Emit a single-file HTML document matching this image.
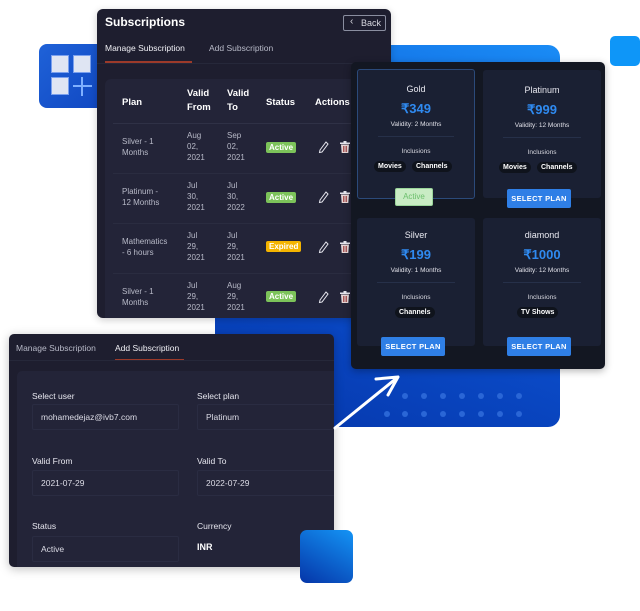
<!DOCTYPE html>
<html><head><meta charset="utf-8"><style>
*{margin:0;padding:0;box-sizing:border-box}
body{width:640px;height:611px;background:#fff;position:relative;overflow:hidden;font-family:"Liberation Sans",sans-serif;color:#e6e6ee}
.abs{position:absolute}
.t{position:absolute;white-space:nowrap}
.badge{position:absolute;font-size:8px;font-weight:bold;color:#fff;padding:1px 3px;border-radius:2px}
.card{position:absolute;background:#1a2033;border-radius:3px}
.card .n{position:absolute;width:100%;text-align:center;font-size:9px;color:#e8e8f0}
.card .p{position:absolute;width:100%;text-align:center;font-size:13px;font-weight:bold;color:#2f8af0}
.card .v{position:absolute;width:100%;text-align:center;font-size:6.5px;color:#e0e0e8}
.card .i{position:absolute;width:100%;text-align:center;font-size:6.5px;color:#d8d8e0}
.card hr{position:absolute;left:20px;right:20px;border:0;border-top:1px solid #263049}
.chip{position:absolute;font-size:7px;font-weight:bold;background:#0f131c;border-radius:6px;padding:2px 4px;color:#fff}
.btn{position:absolute;background:#2f7fe6;color:#fff;font-size:7.5px;font-weight:bold;text-align:center;border-radius:2px;letter-spacing:.3px}
.lbl{position:absolute;font-size:8.5px;color:#e6e6ee}
.inp{position:absolute;font-size:8.5px;color:#dcdce6;border:1px solid #2a2c42;border-radius:2px;padding:7px 8px;height:26px}
.ic{position:absolute}
</style></head><body>
<div class="abs" style="left:39px;top:44px;width:120px;height:64px;border-radius:8px;background:linear-gradient(135deg,#1f62d8,#0a3cb8)"></div>
<div class="abs" style="left:215px;top:45px;width:345px;height:382px;border-radius:12px;background:linear-gradient(200deg,#1a8cf5 0%,#0d55d6 45%,#0536aa 100%)"></div>
<div class="abs" style="left:610px;top:36px;width:30px;height:30px;border-radius:5px;background:#0e96f8"></div>
<div class="abs" style="left:300px;top:530px;width:53px;height:53px;border-radius:7px;background:linear-gradient(210deg,#1494f5,#0535a8);z-index:5"></div>
<div class="abs" style="left:51px;top:55px;width:18px;height:18px;background:#dfe5f3;border:1px solid #7aa0ee"></div>
<div class="abs" style="left:73px;top:55px;width:18px;height:18px;background:#dfe5f3;border:1px solid #7aa0ee"></div>
<div class="abs" style="left:51px;top:77px;width:18px;height:18px;background:#dfe5f3;border:1px solid #7aa0ee"></div>
<div class="abs" style="left:73px;top:85px;width:19px;height:2px;background:#7fb0ff"></div>
<div class="abs" style="left:81px;top:77px;width:2px;height:19px;background:#7fb0ff"></div>
<svg class="abs" style="left:380px;top:385px" width="170" height="40">
<g fill="#2a66d6">
<circle cx="25" cy="11" r="3"/><circle cx="44" cy="11" r="3"/><circle cx="63" cy="11" r="3"/><circle cx="82" cy="11" r="3"/><circle cx="101" cy="11" r="3"/><circle cx="120" cy="11" r="3"/><circle cx="139" cy="11" r="3"/>
<circle cx="7" cy="29" r="3"/><circle cx="25" cy="29" r="3"/><circle cx="44" cy="29" r="3"/><circle cx="63" cy="29" r="3"/><circle cx="82" cy="29" r="3"/><circle cx="101" cy="29" r="3"/><circle cx="120" cy="29" r="3"/><circle cx="139" cy="29" r="3"/></g></svg>
<svg class="abs" style="left:330px;top:365px;z-index:6" width="80" height="70"><path d="M5 63 L68 12 M46 14 L68 12 L58 30" stroke="#fff" stroke-width="3" fill="none" stroke-linecap="round" stroke-linejoin="round"/></svg>

<div class="abs" style="left:97px;top:9px;width:294px;height:309px;background:#1e1e2f;border-radius:6px;overflow:hidden;box-shadow:0 2px 8px rgba(0,0,0,.2)">
<div class="t" style="left:8px;top:6px;font-size:12px;font-weight:bold;color:#fff">Subscriptions</div>
<div class="abs" style="left:246px;top:6px;width:43px;height:16px;border:1px solid #8a8ea0;border-radius:2px;font-size:9px;color:#d8d8e0;padding:2px 0 0 17px">Back</div>
<div class="t" style="left:253px;top:7px;font-size:10px;color:#d8d8e0">‹</div>
<div class="t" style="left:8px;top:34px;font-size:8.5px;color:#f0f0f5">Manage Subscription</div>
<div class="t" style="left:112px;top:34px;font-size:8.5px;color:#b8bac8">Add Subscription</div>
<div class="abs" style="left:8px;top:52px;width:87px;height:2px;background:#9c3a2a"></div>
<div class="abs" style="left:0;top:54px;width:294px;height:1px;background:#26283a"></div>
<div class="abs" style="left:8px;top:70px;width:290px;height:250px;background:#232438;border-radius:6px">
<div class="t" style="left:17px;top:18px;font-size:9.5px;font-weight:bold;color:#fff">Plan</div>
<div class="t" style="left:82px;top:8px;font-size:9.5px;font-weight:bold;color:#fff;line-height:14px">Valid<br>From</div>
<div class="t" style="left:122px;top:8px;font-size:9.5px;font-weight:bold;color:#fff;line-height:14px">Valid<br>To</div>
<div class="t" style="left:161px;top:18px;font-size:9.5px;font-weight:bold;color:#fff">Status</div>
<div class="t" style="left:210px;top:18px;font-size:9.5px;font-weight:bold;color:#fff">Actions</div>
<div class="abs" style="left:8px;top:44px;width:290px;height:1px;background:#2f3146"></div>
<div class="abs" style="left:8px;top:94px;width:290px;height:1px;background:#2a2c40"></div>
<div class="abs" style="left:8px;top:144px;width:290px;height:1px;background:#2a2c40"></div>
<div class="abs" style="left:8px;top:194px;width:290px;height:1px;background:#2a2c40"></div>
</div>
</div>
<div style="font-size:8px;color:#b8bac8;line-height:11px">
<div class="t" style="left:122px;top:136px">Silver - 1<br>Months</div>
<div class="t" style="left:187px;top:130px">Aug<br>02,<br>2021</div>
<div class="t" style="left:227px;top:130px">Sep<br>02,<br>2021</div>
<div class="t" style="left:122px;top:186px">Platinum -<br>12 Months</div>
<div class="t" style="left:187px;top:180px">Jul<br>30,<br>2021</div>
<div class="t" style="left:227px;top:180px">Jul<br>30,<br>2022</div>
<div class="t" style="left:122px;top:236px">Mathematics<br>- 6 hours</div>
<div class="t" style="left:187px;top:230px">Jul<br>29,<br>2021</div>
<div class="t" style="left:227px;top:230px">Jul<br>29,<br>2021</div>
<div class="t" style="left:122px;top:286px">Silver - 1<br>Months</div>
<div class="t" style="left:187px;top:280px">Jul<br>29,<br>2021</div>
<div class="t" style="left:227px;top:280px">Aug<br>29,<br>2021</div>
</div>
<div class="badge" style="left:266px;top:142px;background:#7cc35a">Active</div>
<div class="badge" style="left:266px;top:192px;background:#7cc35a">Active</div>
<div class="badge" style="left:266px;top:241px;background:#f4b400">Expired</div>
<div class="badge" style="left:266px;top:291px;background:#7cc35a">Active</div>
<svg class="ic" style="left:318px;top:140px" width="36" height="170">
<defs><g id="r"><path d="M2 10 L8 2 L10 4 L4 12 L1.5 12.5 Z" fill="none" stroke="#e6e6ee" stroke-width="1"/>
<g transform="translate(22,1)"><rect x="0" y="1.5" width="10" height="1.5" fill="#e6e6ee"/><rect x="3.5" y="0" width="3" height="2" fill="#e6e6ee"/><path d="M1 3.5 H9 L8.3 12 H1.7 Z" fill="#e8d8d8"/><path d="M3.5 5 V11 M5 5 V11 M6.5 5 V11" stroke="#9a3a3a" stroke-width=".8"/></g></g></defs>
<use href="#r" y="0"/><use href="#r" y="50"/><use href="#r" y="100"/><use href="#r" y="150"/>
</svg>

<div class="abs" style="left:351px;top:62px;width:254px;height:307px;background:#131722;border-radius:5px;box-shadow:0 2px 8px rgba(0,0,0,.3)">
<div class="card" style="left:6px;top:7px;width:118px;height:130px;border:1px solid #2b4a7a">
<div class="n" style="top:14px">Gold</div><div class="p" style="top:31px">₹349</div><div class="v" style="top:51px">Validity: 2 Months</div>
<hr style="top:66px"><div class="i" style="top:78px">Inclusions</div>
<div class="chip" style="left:16px;top:91px">Movies</div><div class="chip" style="left:54px;top:91px">Channels</div></div>
<div class="abs" style="left:44px;top:126px;width:38px;height:18px;background:#c9ecc4;border:1px solid #9ad59a;border-radius:2px;color:#6cbf6c;font-size:8px;text-align:center;padding-top:3px">Active</div>
<div class="card" style="left:132px;top:8px;width:118px;height:128px">
<div class="n" style="top:15px">Platinum</div><div class="p" style="top:32px">₹999</div><div class="v" style="top:52px">Validity: 12 Months</div>
<hr style="top:67px"><div class="i" style="top:79px">Inclusions</div>
<div class="chip" style="left:16px;top:92px">Movies</div><div class="chip" style="left:54px;top:92px">Channels</div></div>
<div class="btn" style="left:156px;top:127px;width:64px;height:19px;padding-top:5px">SELECT PLAN</div>
<div class="card" style="left:6px;top:156px;width:118px;height:128px">
<div class="n" style="top:12px">Silver</div><div class="p" style="top:29px">₹199</div><div class="v" style="top:49px">Validity: 1 Months</div>
<hr style="top:64px"><div class="i" style="top:76px">Inclusions</div>
<div class="chip" style="left:38px;top:89px">Channels</div></div>
<div class="btn" style="left:30px;top:275px;width:64px;height:19px;padding-top:5px">SELECT PLAN</div>
<div class="card" style="left:132px;top:156px;width:118px;height:128px">
<div class="n" style="top:12px">diamond</div><div class="p" style="top:29px">₹1000</div><div class="v" style="top:49px">Validity: 12 Months</div>
<hr style="top:64px"><div class="i" style="top:76px">Inclusions</div>
<div class="chip" style="left:34px;top:89px">TV Shows</div></div>
<div class="btn" style="left:156px;top:275px;width:64px;height:19px;padding-top:5px">SELECT PLAN</div>
</div>

<div class="abs" style="left:9px;top:334px;width:325px;height:233px;background:#1e1e2f;border-radius:5px;overflow:hidden;box-shadow:0 2px 10px rgba(0,0,0,.25)">
<div class="t" style="left:7px;top:9px;font-size:8.5px;color:#b8bac8">Manage Subscription</div>
<div class="t" style="left:106px;top:9px;font-size:8.5px;color:#f0f0f5">Add Subscription</div>
<div class="abs" style="left:106px;top:25px;width:69px;height:1px;background:#9c3a2a"></div>
<div class="abs" style="left:0;top:26px;width:325px;height:1px;background:#26283a"></div>
<div class="abs" style="left:8px;top:37px;width:330px;height:210px;background:#232438;border-radius:5px"></div>
<div class="lbl" style="left:23px;top:57px">Select user</div>
<div class="inp" style="left:23px;top:70px;width:147px">mohamedejaz@ivb7.com</div>
<div class="lbl" style="left:188px;top:57px">Select plan</div>
<div class="inp" style="left:188px;top:70px;width:150px">Platinum</div>
<div class="lbl" style="left:23px;top:122px">Valid From</div>
<div class="inp" style="left:23px;top:136px;width:147px">2021-07-29</div>
<div class="lbl" style="left:188px;top:122px">Valid To</div>
<div class="inp" style="left:188px;top:136px;width:150px">2022-07-29</div>
<div class="lbl" style="left:23px;top:187px">Status</div>
<div class="inp" style="left:23px;top:202px;width:147px">Active</div>
<div class="lbl" style="left:188px;top:187px">Currency</div>
<div class="t" style="left:188px;top:208px;font-size:9px;font-weight:bold;color:#fff">INR</div>
</div>
</body></html>
